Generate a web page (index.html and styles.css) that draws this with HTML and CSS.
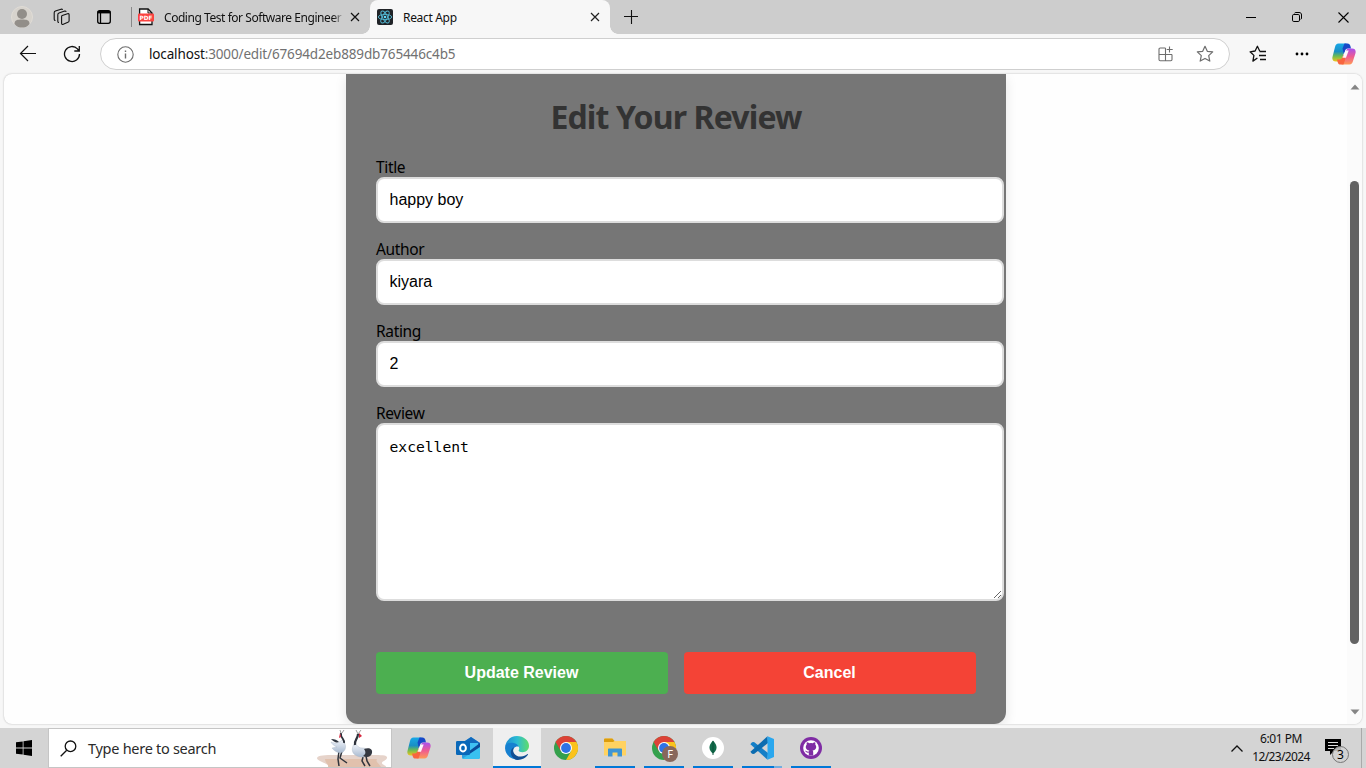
FILE: index.html
```html
<!DOCTYPE html>
<html lang="en">
<head>
<meta charset="utf-8">
<title>React App</title>
<link rel="stylesheet" href="styles.css">
</head>
<body>
<svg class="defs" width="0" height="0" aria-hidden="true">
  <defs>
    <linearGradient id="cpA" x1="0" y1="0" x2="0" y2="1"><stop offset="0" stop-color="#18a8e8"/><stop offset=".45" stop-color="#1a8fc4"/><stop offset=".7" stop-color="#6dbb52"/><stop offset="1" stop-color="#f0c51c"/></linearGradient>
    <linearGradient id="cpB" x1="0" y1="0" x2="0" y2="1"><stop offset="0" stop-color="#a850ee"/><stop offset=".5" stop-color="#ee5b92"/><stop offset="1" stop-color="#ff9a55"/></linearGradient>
    <linearGradient id="edA" x1="0" y1="0" x2="1" y2="0"><stop offset="0" stop-color="#1b8bd3"/><stop offset=".5" stop-color="#2cbcd3"/><stop offset="1" stop-color="#5fdc6a"/></linearGradient>
    <symbol id="copilot" viewBox="0 0 24 24">
      <path d="M6.500 1.500h8L10 17c-.6 2-1.500 2.500-3.500 2.500H4c-3 0-4.300-2-3.400-5L3 5c.6-2.200 1.500-3.500 3.500-3.500z" fill="url(#cpA)"/>
      <path d="M12.500 1.500h3c1.700 0 2.400 1 2.900 2.600L19 6.500h-3c-1.500 0-2.400.7-2.900 2.200l-1.300 3.800-1.300-6z" fill="#1749c8"/>
      <path d="M17.500 22.500h-8L14 9c.6-2 1.500-2.500 3.500-2.500H20c3 0 4.300 2 3.400 5L21 19c-.6 2.200-1.500 3.500-3.500 3.500z" fill="url(#cpB)"/>
      <path d="M11.500 22.500h-3c-1.700 0-2.400-1-2.900-2.600L5 17.500h2.500c1.500 0 2.400-.7 2.900-2.200l1.300-3 1.500 5.200z" fill="#f8653f"/>
      <path d="M13.500 8.500h3.200l-2.700 7.200h-3.400z" fill="#fff" opacity=".95"/>
    </symbol>
    <symbol id="chrome" viewBox="0 0 24 24">
      <circle cx="12" cy="12" r="12" fill="#34a04c"/>
      <path d="M12 6h10.400A12 12 0 0 1 12 24l5.200-9z" fill="#fbc21c"/>
      <path d="M1.600 6 6.800 15 12 12V6h10.400A12 12 0 0 0 1.600 6z" fill="#dc4237"/>
      <circle cx="12" cy="12" r="6" fill="#fff"/><circle cx="12" cy="12" r="4.900" fill="#2e73e6"/>
    </symbol>
  </defs>
</svg>

<header class="tabstrip">
  <div class="tools">
    <svg width="22" height="22" viewBox="0 0 22 22"><circle cx="11" cy="11" r="10.500" fill="#d7d3cd" stroke="#e0dcd6"/><circle cx="11" cy="8" r="5" fill="#928e89"/><path d="M3.500 18c0-4 3-4.500 7.500-4.500s7.500.5 7.500 4.500c-2 3-5 3.500-7.500 3.500S5.500 21 3.500 18z" fill="#928e89"/></svg>
    <svg width="18" height="18" viewBox="0 0 18 18" fill="none" stroke="#111" stroke-width="1.100" stroke-linejoin="round"><path d="M9.300 7.500 14.500 5.700c1-.3 1.600 0 1.600 1v6c0 .9-.4 1.300-1.200 1.600l-4.600 2c-1 .4-1.700 0-1.700-1V8.600c0-.6.200-.9.700-1.100zM6 14.500c-.8 0-1.200-.5-1.200-1.300V6.700c0-.9.300-1.400 1.200-1.700l5.600-1.900c.8-.2 1.300 0 1.600.8M2.500 12.500c-.9 0-1.300-.5-1.300-1.300V4.800c0-.9.400-1.400 1.200-1.700L8 1.200c.8-.2 1.300 0 1.600.7"/></svg>
    <svg width="16" height="16" viewBox="0 0 16 16" fill="none" stroke="#000" stroke-width="1.300"><rect x="1.700" y="1.700" width="12.600" height="12.600" rx="2"/><path d="M1.700 3.200h12.600" stroke-width="2.400"/><path d="M4.500 4v10"/></svg>
  </div>
  <div class="tab tab-idle">
    <svg width="16" height="18" viewBox="0 0 16 18"><path d="M1.600 1h8.500L14 5v11.500H1.600z" fill="#fff" stroke="#111" stroke-width="1.300"/><path d="M10 1v4h4" fill="none" stroke="#111"/><rect y="5.500" width="16" height="8" rx="1" fill="#fb4340"/><text x="8" y="12" class="pdf" text-anchor="middle">PDF</text></svg>
    <span class="tab-title t-coding">Coding Test for Software Engineer</span>
    <svg class="x" width="10" height="10" viewBox="0 0 10 10"><path d="m1 1 8 8M9 1 1 9" stroke="#111" stroke-width="1.200"/></svg>
  </div>
  <div class="tab tab-active">
    <svg width="16" height="16" viewBox="0 0 16 16"><rect width="16" height="16" rx="2" fill="#202327"/><g fill="none" stroke="#53bad5" stroke-width=".9"><ellipse cx="8" cy="8" rx="6.700" ry="2.600"/><ellipse cx="8" cy="8" rx="6.700" ry="2.600" transform="rotate(60 8 8)"/><ellipse cx="8" cy="8" rx="6.700" ry="2.600" transform="rotate(120 8 8)"/></g><circle cx="8" cy="8" r="1.300" fill="#61dafb"/></svg>
    <span class="tab-title t-react">React App</span>
    <svg class="x" width="10" height="10" viewBox="0 0 10 10"><path d="m1 1 8 8M9 1 1 9" stroke="#222" stroke-width="1.200"/></svg>
  </div>
  <svg class="plus" width="14" height="14" viewBox="0 0 14 14"><path d="M0 6.500h14M7.500 0v14" stroke="#111" stroke-width="1.100"/></svg>
  <div class="winctl">
    <span><svg width="10" height="10" viewBox="0 0 10 10"><path d="M0 5.500h10" stroke="#000"/></svg></span>
    <span><svg width="10" height="10" viewBox="0 0 10 10" fill="none" stroke="#000"><rect x=".5" y="2.500" width="7" height="7" rx="1.300"/><path d="M2.500 1.400C2.700.8 3 .5 3.800.5H7c1.700 0 2.500.8 2.500 2.500v3c0 .8-.3 1.200-.9 1.400"/></svg></span>
    <span><svg width="11" height="11" viewBox="0 0 11 11"><path d="m.5.5 10 10M10.500.5l-10 10" stroke="#000" stroke-width="1.100"/></svg></span>
  </div>
</header>

<nav class="toolbar">
  <svg class="back" width="18" height="18" viewBox="0 0 18 18" fill="none" stroke="#111" stroke-width="1.200"><path d="M17 8.500H1.500M9 1 1.500 8.500 9 16"/></svg>
  <svg class="reload" width="18" height="18" viewBox="0 0 18 18" fill="none" stroke="#111" stroke-width="1.300"><path d="M16.500 9a7.500 7.500 0 1 1-2-5.100L16 6M16.300 1v5h-5"/></svg>
  <div class="address">
    <svg width="17" height="17" viewBox="0 0 17 17" fill="none" stroke="#6d6d6d" stroke-width="1.100"><circle cx="8.500" cy="8.500" r="7.700"/><path d="M8.500 7.500v5M8.500 4.500v1.600" stroke-width="1.400"/></svg>
    <span class="url"><b>localhost</b>:3000/edit/67694d2eb889db765446c4b5</span>
    <svg class="apps" width="16" height="16" viewBox="0 0 16 16" fill="none" stroke="#6d6d6d" stroke-width="1.100"><path d="M7.500 2H2.200C1.500 2 1 2.500 1 3.200v10.300c0 .7.500 1.200 1.200 1.200h10.600c.7 0 1.200-.5 1.200-1.200V8.500M7.500 2v12.700M1 8.500h13M11.500.5v6M8.700 3.500h6"/></svg>
    <svg class="star" width="18" height="18" viewBox="0 0 18 18" fill="none" stroke="#6d6d6d" stroke-width="1.200" stroke-linejoin="round"><path d="m9 1.300 2.300 5 5.400.6-4 3.700 1.100 5.500L9 13.400l-4.800 2.700 1.100-5.500-4-3.700 5.400-.6z"/></svg>
  </div>
  <svg class="fav" width="18" height="18" viewBox="0 0 18 18" fill="none" stroke="#111" stroke-width="1.300" stroke-linejoin="round"><path d="m10.700 6-2.300-4.700L6.100 6l-5 .8 3.800 3.600-1 5.700L8.400 13"/><path d="M10.500 6.500H17M10 10.500h7M11 14.500h6"/></svg>
  <svg class="dots" width="14" height="4" viewBox="0 0 14 4"><circle cx="2" cy="2" r="1.400"/><circle cx="7" cy="2" r="1.400"/><circle cx="12" cy="2" r="1.400"/></svg>
  <svg class="cp" width="24" height="24"><use href="#copilot"/></svg>
</nav>

<div class="viewport">
  <main class="page">
    <form class="card">
      <h1>Edit Your Review</h1>
      <label>Title</label>
      <input type="text" value="happy boy">
      <label>Author</label>
      <input type="text" value="kiyara">
      <label>Rating</label>
      <input type="text" value="2">
      <label>Review</label>
      <textarea spellcheck="false">excellent</textarea>
      <div class="actions">
        <button type="button" class="update">Update Review</button>
        <button type="button" class="cancel">Cancel</button>
      </div>
    </form>
  </main>
  <div class="scrollbar">
    <svg width="10" height="6" viewBox="0 0 10 6"><path d="M.5 5.500 5 .5l4.500 5z" fill="#858585"/></svg>
    <div class="thumb"></div>
    <svg width="10" height="6" viewBox="0 0 10 6"><path d="M.5.5 5 5.500 9.500.5z" fill="#858585"/></svg>
  </div>
</div>

<footer class="taskbar">
  <div class="start"><svg width="16" height="16" viewBox="0 0 16 16"><path d="M0 2.300 6.700 1.400v6.200H0zM7.500 1.300 16 0v7.600H7.500zM0 8.400h6.700v6.200L0 13.700zM7.500 8.400H16V16l-8.500-1.200z"/></svg></div>
  <div class="search">
    <svg width="17" height="17" viewBox="0 0 17 17" fill="none" stroke="#111" stroke-width="1.300"><circle cx="10.500" cy="6.300" r="5.300"/><path d="M6.700 10.200.7 16.200"/></svg>
    <span class="hint">Type here to search</span>
    <svg class="cranes" width="72" height="38" viewBox="0 0 72 38">
      <defs><linearGradient id="feather" x1="0" y1="0" x2="0" y2="1"><stop offset="0" stop-color="#f0f4fa"/><stop offset="1" stop-color="#a9bad0"/></linearGradient></defs>
      <path d="M0 29c1-3 8-3 18-3h38c8 0 15 0 14 3s-5 3-5 5 4 2 4 4H11c2-4-11-5-11-9z" fill="#e6d3ca"/>
      <path d="M8 30h52c-2 3 3 5 4 8H11c1-3-3-4-3-8z" fill="#ddb699" opacity=".6"/>
      <path d="M22 22l-1 8 1 7M25 22l-2 7 7 5M46 28l-1 4 3 5M49 27l1 5 3 5" fill="none" stroke="#30343c" stroke-width="1.500"/>
      <path d="M25 11c4 3 5 9 1 12-3 2-8 0-11-4l5-1c-3-1-5-3-6-5 4 2 8 1 11-2z" fill="url(#feather)" stroke="#a6b2c2" stroke-width=".4"/>
      <path d="M14 10c4 0 6 1 8 3-3 1-5 0-8-3z" fill="#303640"/>
      <path d="M27 14c1-4-4-5-3-10" fill="none" stroke="#2e323b" stroke-width="1.900"/><path d="M24 4l-1-3M25 4l2-3" stroke="#888" stroke-width=".8"/><path d="M23 4l1 4-2 1z" fill="#d7263d"/>
      <path d="M37 15c-3 5-2 10 3 12 5 2 10 1 11-3 0-4-3-5-6-5-5 0-4-4-8-4z" fill="url(#feather)" stroke="#a6b2c2" stroke-width=".4"/>
      <path d="M47 20c5-2 9 0 8 4s-5 5-9 3c3-2 3-4 1-7z" fill="#343841"/>
      <path d="M38 16c-1-5 3-6 3-11" fill="none" stroke="#2e323b" stroke-width="2.200"/><path d="M41 5l-2-4M41 5l3-4" stroke="#888" stroke-width=".8"/><path d="M42 4l3 3-3 2z" fill="#d7263d"/>
    </svg>
  </div>
  <div class="tiles">
    <div class="tile"><svg width="24" height="24"><use href="#copilot"/></svg></div>
    <div class="tile"><svg width="26" height="24" viewBox="0 0 26 24"><path d="M7 7 16 1l9 6v14c0 1.500-1 2-2 2H9c-1.500 0-2-1-2-2z" fill="#2aa0df"/><path d="M7 7 16 1l9 6-9 7z" fill="#1269bd"/><path d="M9 7h14v5l-7 5-7-4z" fill="#3fc0f2"/><path d="m13 16 12-9v5l-9 7z" fill="#0a4a98"/><path d="M7 23 25 11v10c0 1.500-1 2-2 2z" fill="#38c1f0"/><rect x="1" y="5" width="14" height="14" rx="1.300" fill="#0968b9"/><ellipse cx="8" cy="12" rx="2.900" ry="3.500" fill="none" stroke="#fff" stroke-width="2"/></svg></div>
    <div class="tile on current"><svg width="24" height="24" viewBox="0 0 24 24"><path d="M.1 11C.7 4.700 5.500 0 12 0c6.700 0 12 4.500 12 9.800 0 4-3 6.400-6.500 6.400-2.600 0-4.300-1-3.800-2 1-1.500.6-3.200-.8-4.200C9 7 3 7.500.1 11z" fill="url(#edA)"/><path d="M0 12c0-4 4-5.600 7.500-5.300 3 .2 5.500 1.700 6.200 4-4-1-6.200 2.500-5.500 6 .6 3 3.300 5.500 7 6.300A12 12 0 0 1 0 12z" fill="#1680d0"/><path d="M9 11.200c-3 4.300 1.500 9.800 7 9.400 2.500-.1 4.600-1.200 6.500-2.600.4-.3.800.1.500.6-2 3.300-6 5.400-10.200 5.400C7.500 23.500 5 18 6 14.700 6.600 12.700 7.700 11.800 9 11.200z" fill="#124f94"/></svg></div>
    <div class="tile"><svg width="24" height="24"><use href="#chrome"/></svg></div>
    <div class="tile on"><svg width="22" height="20" viewBox="0 0 22 20"><path d="M0 2c0-1 .3-1.500 1.300-1.500h7L10.500 3H22v14.500H0z" fill="#ffd261"/><path d="M0 3.500V2C0 1 .3.500 1.300.5h7L10.500 3 9 4H0z" fill="#dc9d0d"/><path d="M4 18.500v-7c0-.8.300-1 1-1h12c.7 0 1 .2 1 1v7h-4.500v-4h-5v4z" fill="#3e94d4"/></svg></div>
    <div class="tile on"><svg class="profile" width="26" height="26" viewBox="0 0 26 26"><svg width="24" height="24"><use href="#chrome"/></svg><circle cx="18" cy="18" r="8" fill="#88675c"/><text x="18" y="22" class="badge-f" text-anchor="middle">F</text></svg></div>
    <div class="tile on"><svg width="22" height="22" viewBox="0 0 22 22"><circle cx="11" cy="11" r="11" fill="#fff"/><path d="M11 3.500c5 5.500 4.500 9.500 0 13-4.500-3.500-5-7.500 0-13z" fill="#126b4b"/><path d="M11 4v14" stroke="#0a4f36" stroke-width=".9"/></svg></div>
    <div class="tile on split"><svg width="24" height="24" viewBox="0 0 24 24"><path d="M4 6 18 17l-.5 6.700L.4 8.300 2 6.200z" fill="#147fc7"/><path d="M18 7 4 18l-2-.2-1.600-2L17.500.3z" fill="#0b6cb0"/><path d="M17.500.3 24 3v18l-6.500 2.700z" fill="#2aa7ee"/></svg></div>
    <div class="tile on"><svg width="22" height="22" viewBox="0 0 22 22"><circle cx="11" cy="11" r="11" fill="#7f2ca4"/><circle cx="11" cy="11" r="7.800" fill="#fff"/><path d="M8.800 18.400v-2.800c-2.800.4-2.500-1.400-3.800-1.700 1.500-.5 1.800 1.200 3.900.6.100-.5.200-.8.500-1-3.500-.6-4.600-3.700-2.700-5.800-.2-.9-.1-1.700.2-2.400.9 0 1.700.5 2.300.9a7 7 0 0 1 3.600 0c.6-.4 1.400-.9 2.300-.9.300.7.400 1.500.2 2.400 1.900 2.100.8 5.200-2.700 5.800.4.400.6.900.6 1.600v3.300z" fill="#7f2ca4"/></svg></div>
  </div>
  <div class="tray">
    <svg class="chev" width="12" height="7" viewBox="0 0 12 7"><path d="m.5 6.500 5.500-5.500 5.500 5.500" fill="none" stroke="#111" stroke-width="1.300"/></svg>
    <div class="clock"><span class="time">6:01 PM</span><span class="date">12/23/2024</span></div>
    <svg class="note" width="24" height="26" viewBox="0 0 24 26"><path d="M0 1h16v12H9l-4 4v-4H0z"/><path d="M3 4.500h10M3 7.500h10M3 10.500h6" stroke="#ddd" stroke-width="1.100"/><circle cx="15.500" cy="16.500" r="8" fill="#d1d1d1" fill-opacity=".85" stroke="#777"/><text x="15.500" y="21" class="count" text-anchor="middle">3</text></svg>
    <div class="peek"></div>
  </div>
</footer>
</body>
</html>
```
FILE: styles.css
```css
* { box-sizing: border-box; }
body { margin: 0; width: 1366px; height: 768px; overflow: hidden; display: flex; flex-direction: column; background: #f7f7f7; font-family: "Noto Sans", "Open Sans", sans-serif; color: #111; }
svg { display: block; flex: none; }
.defs { position: absolute; }
.tabstrip { height: 34px; flex: none; display: flex; align-items: center; background: #cdcdcd; }
.tools { width: 131px; display: flex; align-items: center; padding-left: 11px; }
.tools svg + svg { margin-left: 20px; }
.tools svg + svg + svg { margin-left: 25px; }
.tab { height: 34px; display: flex; align-items: center; font-size: 12px; white-space: nowrap; }
.tab-idle { width: 239px; padding-left: 6px; border-left: 1px solid #888; height: 20px; }
.tab-title { margin-left: 10px; }
.t-coding { width: 182px; height: 17px; line-height: 17px; letter-spacing: -.45px; -webkit-mask-image: linear-gradient(90deg, #000 93%, transparent 99%); mask-image: linear-gradient(90deg, #000 93%, transparent 99%); }
.t-react { letter-spacing: -.32px; }
.tab-idle .x { margin-left: 4px; }
.tab-active { width: 240px; padding: 0 10px 0 7px; background: #f7f7f7; border-radius: 8px 8px 0 0; position: relative; }
.tab-active::before, .tab-active::after { content: ""; position: absolute; bottom: 0; width: 8px; height: 8px; }
.tab-active::before { left: -8px; background: radial-gradient(circle at 0 0, #cdcdcd 7.500px, #f7f7f7 8px); }
.tab-active::after { right: -8px; background: radial-gradient(circle at 100% 0, #cdcdcd 7.500px, #f7f7f7 8px); }
.tab-active .x { margin-left: auto; }
.plus { margin-left: 14px; }
.winctl { margin-left: auto; display: flex; }
.winctl span { width: 46px; display: flex; justify-content: center; }
.pdf { font: 700 5.800px "DejaVu Sans", sans-serif; fill: #fff; }
.toolbar { height: 40px; flex: none; display: flex; align-items: center; padding-left: 19px; }
.reload { margin-left: 26px; }
.address { margin-left: 19px; width: 1130px; height: 32px; border: 1px solid #cfcfcf; border-radius: 16px; background: #fff; display: flex; align-items: center; padding-left: 16px; font-size: 13.500px; }
.url { margin-left: 15px; color: #717171; letter-spacing: -.145px; white-space: nowrap; }
.url b { font-weight: 400; color: #111; }
.apps { margin-left: auto; }
.star { margin: 0 15px 0 22px; }
.fav { margin-left: 19px; }
.dots { margin-left: 28px; }
.cp { margin-left: 23px; }
.viewport { flex: none; height: 650px; margin: 0 4px; display: flex; background: #fefefe; border-radius: 8px; overflow: hidden; box-shadow: 0 0 2px rgba(0,0,0,.28); }
.page { flex: 1; display: flex; padding-left: 342px; }
.card { width: 660px; height: 650px; padding: 19px 30px 30px; background: #767676; border-radius: 0 0 12px 12px; box-shadow: 0 4px 12px rgba(0,0,0,.1); display: flex; flex-direction: column; }
h1 { margin: 0 0 20px; height: 44px; line-height: 47px; font-size: 32px; font-weight: 700; color: #333; text-align: center; letter-spacing: -.86px; white-space: nowrap; }
label { height: 20px; line-height: 21px; font-size: 15.500px; letter-spacing: -.35px; color: #000; }
input, textarea { display: block; width: 628px; border: 2px solid #ddd; border-radius: 8px; background: #fff; color: #000; padding: 12px 12px 12px 11.500px; outline: 0; font: 16px "Liberation Sans", Arial, sans-serif; }
input { height: 46px; margin-bottom: 16px; }
textarea { height: 178px; font: 14.660px/20px "DejaVu Sans Mono", monospace; letter-spacing: 0; resize: vertical; }
.actions { display: flex; gap: 16px; margin-top: 51px; }
button { width: 292px; height: 42px; border: 0; border-radius: 4px; color: #fff; font: 700 16px "Liberation Sans", Arial, sans-serif; padding: 0 1px 0 0; }
.update { background: #4caf50; }
.cancel { background: #f44336; }
.scrollbar { width: 15px; background: #fbfbfb; display: flex; flex-direction: column; align-items: center; padding: 10px 0 9px; }
.thumb { width: 9px; height: 463px; margin: 91px 0 auto; border-radius: 5px; background: #636363; }
.taskbar { height: 40px; margin-top: 4px; flex: none; display: flex; background: #d4d4d4; }
.start { width: 48px; display: flex; align-items: center; justify-content: center; }
.search { width: 344px; height: 40px; border: 1px solid #c5c5c5; background: #fff; display: flex; align-items: center; padding-left: 11px; font-size: 14.500px; }
.hint { margin-left: 11px; letter-spacing: -.28px; color: #2b2b2b; white-space: nowrap; }
.cranes { margin-left: auto; margin-right: 2px; }
.tiles { display: flex; gap: 1px; margin-left: 3px; }
.tile { width: 48px; height: 40px; display: flex; align-items: center; justify-content: center; position: relative; }
.on::after { content: ""; position: absolute; left: 4px; right: 4px; bottom: 0; height: 2px; background: #0078d7; }
.profile { margin: 2px 0 0 2px; }
.current { background: #efefef; }
.current::after { left: 0; right: 0; }
.split::after { background: linear-gradient(90deg, #0078d7 80%, #72aee0 80%); }
.badge-f { font: 11px "Noto Sans", sans-serif; fill: #fff; }
.tray { margin-left: auto; width: 135px; display: flex; align-items: center; }
.clock { width: 74px; margin-left: 1px; display: flex; flex-direction: column; align-items: center; font-size: 12px; line-height: 18px; white-space: nowrap; }
.time { letter-spacing: -.45px; }
.date { letter-spacing: -.62px; }
.note { margin-left: 7px; margin-top: 6px; }
.count { font: 12px "Noto Sans", sans-serif; }
.peek { width: 1px; height: 40px; margin-left: 12px; background: #aaa; }
```
